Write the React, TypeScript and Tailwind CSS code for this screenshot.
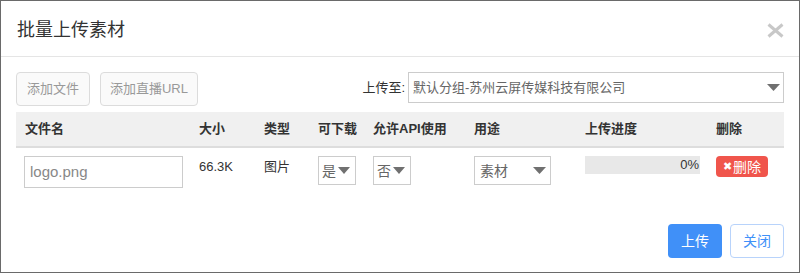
import React from "react";

const Caret = ({ w = 12, h = 7, color = "#6f6f6f" }: { w?: number; h?: number; color?: string }) => (
  <svg width={w} height={h} viewBox={`0 0 ${w} ${h}`}>
    <polygon points={`0,0 ${w},0 ${w / 2},${h}`} fill={color} />
  </svg>
);

const cols = "grid grid-cols-[174px_65px_54px_55px_101px_111px_131px_77px]";

export default function App() {
  return (
    <div
      className="w-[800px] h-[273px] border border-[#6a6a6a] bg-white text-[#333] flex flex-col"
      style={{ fontFamily: '"Liberation Sans", "Noto Sans CJK SC", sans-serif' }}
    >
      <div className="h-[56px] shrink-0 border-b border-[#e5e5e5] flex items-center justify-between pl-[16px] pr-[15px]">
        <div className="text-[18px] leading-[24px] text-[#333] pt-[2px]">批量上传素材</div>
        <svg width="17" height="15" viewBox="0 0 17 15" className="mt-[4px]">
          <line x1="1.5" y1="1.5" x2="15.5" y2="13.5" stroke="#c8c8c8" strokeWidth="3" />
          <line x1="15.5" y1="1.5" x2="1.5" y2="13.5" stroke="#c8c8c8" strokeWidth="3" />
        </svg>
      </div>
      <div className="px-[15px] pt-[15px]">
        <div className="flex items-start">
          <div className="w-[74px] h-[34px] border border-[#dcdcdc] rounded-[4px] bg-[#fafafa] text-[#999] text-[13px] flex items-center justify-center">
            添加文件
          </div>
          <div className="ml-[10px] w-[98px] h-[34px] border border-[#dcdcdc] rounded-[4px] bg-[#fafafa] text-[#999] text-[13px] flex items-center justify-center">
            添加直播URL
          </div>
          <div className="flex-1" />
          <div className="h-[31px] flex items-center text-[13px] text-[#333] mr-[3px]">上传至:</div>
          <div className="w-[376px] h-[31px] border border-[#cccccc] flex items-center justify-between pl-[4px] pr-[3px]">
            <span className="text-[13px] text-[#666]">默认分组-苏州云屏传媒科技有限公司</span>
            <Caret w={13} h={7} color="#707070" />
          </div>
        </div>
        <div className={`${cols} mt-[6px] h-[36px] bg-[#f0f0f0] border-b-2 border-[#dddddd] items-center text-[13px] font-bold text-[#333]`}>
          <div className="pl-[9px]">文件名</div>
          <div className="pl-[9px]">大小</div>
          <div className="pl-[9px]">类型</div>
          <div className="pl-[9px]">可下载</div>
          <div className="pl-[9px]">允许API使用</div>
          <div className="pl-[9px]">用途</div>
          <div className="pl-[9px]">上传进度</div>
          <div className="pl-[9px]">删除</div>
        </div>
        <div className={`${cols} h-[48px] pt-[8px] text-[13px] leading-[20px] text-[#333]`}>
          <div className="pl-[8px]">
            <div className="w-[159px] h-[32px] border border-[#cccccc] flex items-center pl-[5px] text-[15px] text-[#888]">
              logo.png
            </div>
          </div>
          <div className="pl-[9px] pt-[1px]">66.3K</div>
          <div className="pl-[9px] pt-[1px]">图片</div>
          <div className="pl-[9px]">
            <div className="w-[38px] h-[29px] border border-[#cccccc] flex items-center pl-[3px] gap-[2px] text-[14px] text-[#666]">
              是<Caret w={12} h={7} color="#707070" />
            </div>
          </div>
          <div className="pl-[9px]">
            <div className="w-[38px] h-[29px] border border-[#cccccc] flex items-center pl-[3px] gap-[2px] text-[14px] text-[#666]">
              否<Caret w={12} h={7} color="#707070" />
            </div>
          </div>
          <div className="pl-[9px]">
            <div className="w-[77px] h-[29px] border border-[#cccccc] flex items-center justify-between pl-[5px] pr-[4px] text-[14px] text-[#666]">
              素材<Caret w={13} h={7} color="#707070" />
            </div>
          </div>
          <div className="pl-[9px]">
            <div className="w-[115px] h-[18px] bg-[#e8e8e8] flex items-center justify-end pr-[1px] text-[13px] text-[#333]">
              0%
            </div>
          </div>
          <div className="pl-[9px]">
            <div className="w-[52px] h-[21px] rounded-[4px] bg-[#f0554c] text-white text-[14px] flex items-center justify-center leading-none">
              <span className="text-[11px] mr-[1px]">✖</span>删除
            </div>
          </div>
        </div>
        <div className="flex justify-end gap-[8px] mt-[28px]">
          <div className="w-[54px] h-[34px] rounded-[4px] bg-[#4090f8] text-white text-[14px] flex items-center justify-center">
            上传
          </div>
          <div className="w-[54px] h-[34px] rounded-[4px] border border-[#b8d3fb] bg-white text-[#4090f8] text-[14px] flex items-center justify-center">
            关闭
          </div>
        </div>
      </div>
    </div>
  );
}
